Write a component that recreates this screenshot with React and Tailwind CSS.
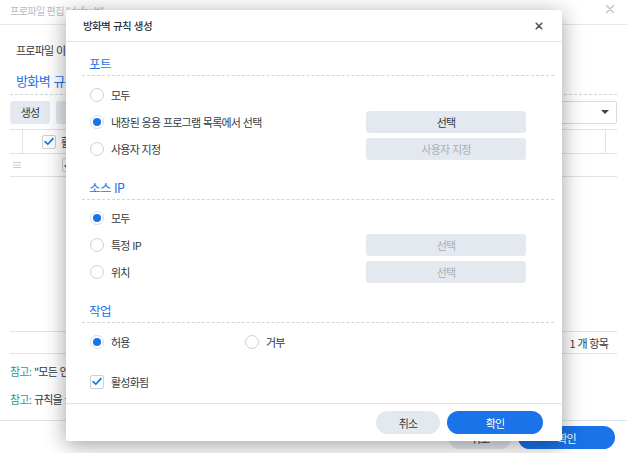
import React from "react";

const FONT = { fontFamily: '"Noto Sans CJK KR", "Noto Sans", sans-serif' };
const T = "text-[11px] tracking-[-0.8px] [word-spacing:1px] text-[#333a44]";

function XIcon({ className, stroke = "#555", w = 2 }) {
  return (
    <svg className={className} viewBox="0 0 10 10" fill="none">
      <path d="M1.5 1.5 L8.5 8.5 M8.5 1.5 L1.5 8.5" stroke={stroke} strokeWidth={w} strokeLinecap="round" />
    </svg>
  );
}

function Check({ className }) {
  return (
    <svg className={className} viewBox="0 0 14 14" fill="none">
      <path d="M2.5 7.2 L5.6 10.2 L11.6 3.6" stroke="#1a73e8" strokeWidth="2" strokeLinecap="round" strokeLinejoin="round" />
    </svg>
  );
}

function Radio({ on }) {
  return on ? (
    <span className="w-[14px] h-[14px] rounded-full border border-[#d3dde9] bg-white flex items-center justify-center shrink-0">
      <span className="w-[8px] h-[8px] rounded-full bg-[#1a73e8]" />
    </span>
  ) : (
    <span className="w-[14px] h-[14px] rounded-full border border-[#c9d2dc] bg-white shrink-0" />
  );
}

function Box() {
  return (
    <span className="w-[14px] h-[14px] rounded-[2px] border border-[#c9d2dc] bg-white flex items-center justify-center shrink-0">
      <Check className="w-[13px] h-[13px]" />
    </span>
  );
}

function Heading({ children }) {
  return (
    <div className="h-[26px] border-b border-dashed border-[#cbd6e0] flex items-center pt-[3px] pl-[7px] text-[12.5px] tracking-[-0.6px] [word-spacing:1px] text-[#1a73e8]">
      {children}
    </div>
  );
}

function Row({ on, label, btn, disabled }) {
  return (
    <div className="h-[27px] flex items-center pl-[8px]">
      <div className="w-[276px] flex items-center gap-[7px]">
        <Radio on={on} />
        <span className={T + " pt-[2px]"}>{label}</span>
      </div>
      {btn && (
        <div
          className={
            "w-[160px] h-[22px] pt-[1px] rounded-[3px] bg-[#e4e9f0] flex items-center justify-center text-[11px] tracking-[-0.8px] [word-spacing:1px] " +
            (disabled ? "text-[#a7afba]" : "text-[#333a44]")
          }
        >
          {btn}
        </div>
      )}
    </div>
  );
}

export default function App() {
  return (
    <div className="relative w-[627px] h-[453px] overflow-hidden bg-white" style={FONT}>
      {/* Background window */}
      <div className="h-[25px] border-b border-[#e3e7ec] flex items-center justify-between pl-[10px] pr-[12px]">
        <span className="text-[10px] tracking-[-0.5px] text-[#b6bcc4] -mt-[4px]">프로파일 편집 "default"</span>
        <XIcon className="w-[10px] h-[10px] -mt-[6px]" stroke="#c3c8ce" w={1.6} />
      </div>
      <div className="px-[10px]">
        <div className={T + " h-[48px] flex items-center pl-[6px] pt-[2px] whitespace-nowrap"}>프로파일 이름: default</div>
        <div className="h-[22px] flex items-center pl-[6px] pb-[6px] border-b border-dashed border-[#cbd6e0] whitespace-nowrap text-[13px] tracking-[-0.6px] [word-spacing:1px] text-[#1a73e8]">
          방화벽 규칙
        </div>
        <div className="h-[34px] flex items-center justify-between">
          <div className="flex gap-[6px]">
            <div className={T + " w-[40px] h-[23px] pt-[1px] rounded-[3px] bg-[#e4e9f0] flex items-center justify-center"}>생성</div>
            <div className={T + " w-[40px] h-[23px] pt-[1px] rounded-[3px] bg-[#e4e9f0] flex items-center justify-center"}>편집</div>
          </div>
          <div className="w-[150px] h-[23px] border border-[#d5dce4] rounded-[2px] flex items-center justify-end pr-[7px]">
            <span className="w-0 h-0 border-l-[4px] border-r-[4px] border-t-[4px] border-l-transparent border-r-transparent border-t-[#444]" />
          </div>
        </div>
        <div className="h-[25px] border-t border-b border-[#dde3ea] flex items-center">
          <div className="w-[13px] h-full border-r border-[#dde3ea]" />
          <div className="pl-[19px] flex items-center gap-[5px]">
            <Box />
            <span className={T + " pt-[2px]"}>활성화됨</span>
          </div>
          <div className="flex-1" />
          <div className="w-[12px] h-full border-l border-[#dde3ea]" />
        </div>
        <div className="h-[23px] border-b border-[#dde3ea] flex items-center">
          <svg className="ml-[3px] w-[8px] h-[8px]" viewBox="0 0 8 8">
            <path d="M0 1.5 H8 M0 4 H8 M0 6.5 H8" stroke="#c9cfd6" strokeWidth="1" />
          </svg>
          <div className="ml-[41px]"><Box /></div>
        </div>
        <div className="h-[154px]" />
        <div className={T + " h-[23px] pt-[2px] border-t border-b border-[#dde3ea] flex items-center justify-end pr-[9px]"}>
          1 개 항목
        </div>
        <div className={T + " h-[32px] pt-[3px] flex items-center whitespace-nowrap"}>
          <span className="text-[#1a9c95] mr-[3px]">참고:</span>"모든 인터페이스" 규칙이 먼저 적용됩니다.
        </div>
        <div className={T + " h-[24px] pt-[2px] flex items-center whitespace-nowrap"}>
          <span className="text-[#1a9c95] mr-[3px]">참고:</span>규칙을 끌어서 순서를 변경할 수 있습니다.
        </div>
      </div>
      <div className="mt-[10px] border-t border-[#dde3ea] h-[34px] flex items-center justify-end gap-[6px] pr-[12px]">
        <div className={T + " w-[64px] h-[23px] pt-[1px] rounded-full bg-[#e4e9f0] flex items-center justify-center"}>취소</div>
        <div className="w-[97px] h-[23px] pt-[1px] rounded-full bg-[#1a73e8] flex items-center justify-center text-[11px] tracking-[-0.8px] text-white">확인</div>
      </div>

      {/* Modal */}
      <div className="absolute left-[66px] top-[10px] w-[496px] h-[431px] bg-white rounded-[3px] shadow-[0_4px_22px_rgba(0,0,0,0.38)] flex flex-col">
        <div className="h-[32px] border-b border-[#dde3ea] flex items-center justify-between pl-[17px] pr-[19px] shrink-0">
          <span className="text-[10.5px] pt-[1px] font-medium tracking-[-0.6px] [word-spacing:1px] text-[#2c333c]">방화벽 규칙 생성</span>
          <XIcon className="w-[8px] h-[8px]" stroke="#555b63" w={2} />
        </div>
        <div className="flex-1 pl-[16px] pr-[8px] pt-[8px]">
          <Heading>포트</Heading>
          <div className="h-[5px]" />
          <Row on={false} label="모두" />
          <Row on label="내장된 응용 프로그램 목록에서 선택" btn="선택" />
          <Row on={false} label="사용자 지정" btn="사용자 지정" disabled />
          <div className="h-[12px]" />
          <Heading>소스 IP</Heading>
          <div className="h-[4px]" />
          <Row on label="모두" />
          <Row on={false} label="특정 IP" btn="선택" disabled />
          <Row on={false} label="위치" btn="선택" disabled />
          <div className="h-[12px]" />
          <Heading>작업</Heading>
          <div className="h-[5px]" />
          <div className="h-[27px] flex items-center pl-[8px]">
            <div className="w-[155px] flex items-center gap-[7px]">
              <Radio on />
              <span className={T + " pt-[2px]"}>허용</span>
            </div>
            <div className="flex items-center gap-[7px]">
              <Radio on={false} />
              <span className={T + " pt-[2px]"}>거부</span>
            </div>
          </div>
          <div className="h-[13px]" />
          <div className="h-[27px] flex items-center pl-[8px] gap-[7px]">
            <Box />
            <span className={T + " pt-[2px]"}>활성화됨</span>
          </div>
        </div>
        <div className="h-[38px] border-t border-[#dde3ea] flex items-center justify-end gap-[7px] pr-[19px] shrink-0">
          <div className={T + " w-[64px] h-[23px] pt-[1px] rounded-full bg-[#e4e9f0] flex items-center justify-center"}>취소</div>
          <div className="w-[96px] h-[23px] pt-[1px] rounded-full bg-[#1a73e8] flex items-center justify-center text-[11px] tracking-[-0.8px] text-white">확인</div>
        </div>
      </div>
    </div>
  );
}
